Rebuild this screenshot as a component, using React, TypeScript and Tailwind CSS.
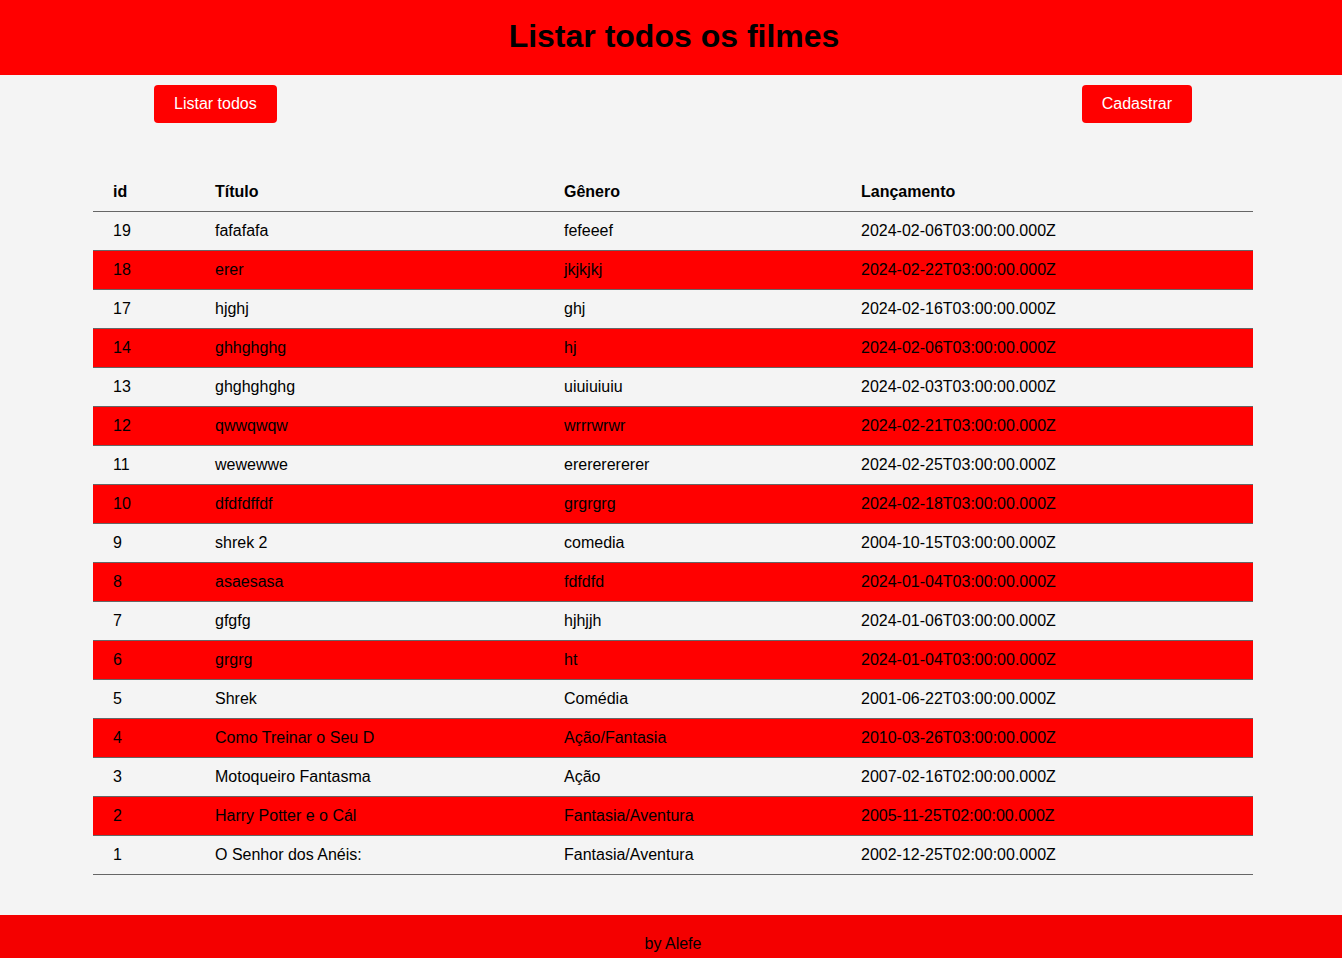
const filmes = [
  { id: 19, titulo: 'fafafafa', genero: 'fefeeef', lancamento: '2024-02-06T03:00:00.000Z' },
  { id: 18, titulo: 'erer', genero: 'jkjkjkj', lancamento: '2024-02-22T03:00:00.000Z' },
  { id: 17, titulo: 'hjghj', genero: 'ghj', lancamento: '2024-02-16T03:00:00.000Z' },
  { id: 14, titulo: 'ghhghghg', genero: 'hj', lancamento: '2024-02-06T03:00:00.000Z' },
  { id: 13, titulo: 'ghghghghg', genero: 'uiuiuiuiu', lancamento: '2024-02-03T03:00:00.000Z' },
  { id: 12, titulo: 'qwwqwqw', genero: 'wrrrwrwr', lancamento: '2024-02-21T03:00:00.000Z' },
  { id: 11, titulo: 'wewewwe', genero: 'erererererer', lancamento: '2024-02-25T03:00:00.000Z' },
  { id: 10, titulo: 'dfdfdffdf', genero: 'grgrgrg', lancamento: '2024-02-18T03:00:00.000Z' },
  { id: 9, titulo: 'shrek 2', genero: 'comedia', lancamento: '2004-10-15T03:00:00.000Z' },
  { id: 8, titulo: 'asaesasa', genero: 'fdfdfd', lancamento: '2024-01-04T03:00:00.000Z' },
  { id: 7, titulo: 'gfgfg', genero: 'hjhjjh', lancamento: '2024-01-06T03:00:00.000Z' },
  { id: 6, titulo: 'grgrg', genero: 'ht', lancamento: '2024-01-04T03:00:00.000Z' },
  { id: 5, titulo: 'Shrek', genero: 'Comédia', lancamento: '2001-06-22T03:00:00.000Z' },
  { id: 4, titulo: 'Como Treinar o Seu D', genero: 'Ação/Fantasia', lancamento: '2010-03-26T03:00:00.000Z' },
  { id: 3, titulo: 'Motoqueiro Fantasma', genero: 'Ação', lancamento: '2007-02-16T02:00:00.000Z' },
  { id: 2, titulo: 'Harry Potter e o Cál', genero: 'Fantasia/Aventura', lancamento: '2005-11-25T02:00:00.000Z' },
  { id: 1, titulo: 'O Senhor dos Anéis:', genero: 'Fantasia/Aventura', lancamento: '2002-12-25T02:00:00.000Z' },
]

export default function App() {
  return (
    <div className="min-h-screen bg-[#f4f4f4] flex flex-col font-['Liberation_Sans',Arial,sans-serif] text-black">
      <header className="h-[75px] bg-[#ff0000] flex items-center justify-center pb-[4px] pl-[6px]">
        <h1 className="text-[32px] font-bold leading-none">Listar todos os filmes</h1>
      </header>

      <div className="flex justify-between pl-[154px] pr-[150px] pt-[10px]">
        <button className="h-[38px] px-5 rounded-[4px] bg-[#ff0000] text-white text-base">Listar todos</button>
        <button className="h-[38px] px-5 rounded-[4px] bg-[#ff0000] text-white text-base">Cadastrar</button>
      </div>

      <div className="px-[93px] pt-[49px] pb-[40px]">
        <table className="w-[1160px] border-collapse text-base">
          <thead>
            <tr className="h-[39px] border-b border-[#666]">
              <th className="w-[102px] pl-5 pt-[2px] text-left font-bold">id</th>
              <th className="w-[349px] pl-5 pt-[2px] text-left font-bold">Título</th>
              <th className="w-[297px] pl-5 pt-[2px] text-left font-bold">Gênero</th>
              <th className="pl-5 pt-[2px] text-left font-bold">Lançamento</th>
            </tr>
          </thead>
          <tbody>
            {filmes.map((f, i) => (
              <tr key={f.id} className={'h-[39px] border-b border-[#666] ' + (i % 2 === 1 ? 'bg-[#ff0000]' : '')}>
                <td className="pl-5">{f.id}</td>
                <td className="pl-5">{f.titulo}</td>
                <td className="pl-5">{f.genero}</td>
                <td className="pl-5">{f.lancamento}</td>
              </tr>
            ))}
          </tbody>
        </table>
      </div>

      <footer className="h-[56px] bg-[#f40000] flex items-center justify-center pt-[3px] pl-[4px]">
        <p className="text-base">by Alefe</p>
      </footer>
    </div>
  )
}
